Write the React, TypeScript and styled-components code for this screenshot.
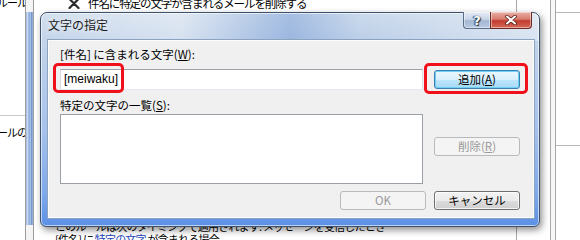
import React from "react";
import styled, { createGlobalStyle } from "styled-components";

const Global = createGlobalStyle`
  html, body { margin: 0; padding: 0; background: #fff; }
  body { font-family: "Noto Sans CJK JP", "Noto Sans", sans-serif; }
`;

const FONT = `"Noto Sans CJK JP", "Noto Sans", sans-serif`;

const Page = styled.div`
  position: relative;
  width: 580px;
  height: 240px;
  overflow: hidden;
  background: #fff;
  display: flex;
  font-family: ${FONT};
  font-size: 11.5px;
  color: #000;
`;

/* ---------- background window ---------- */
const LeftPane = styled.div`
  width: 25px;
  flex: none;
  border-right: 1px solid #9c9c9c;
  display: flex;
  flex-direction: column;
  overflow: hidden;
`;

const ClipText = styled.div<{ $top: number }>`
  display: flex;
  justify-content: flex-end;
  white-space: nowrap;
  height: 13px;
  line-height: 13px;
  margin-top: ${(p) => p.$top}px;
  margin-right: -2px;
  font-size: 11px;
  letter-spacing: -1px;
`;

const LeftRule = styled.div`
  height: 0;
  border-top: 1px solid #c8c8c8;
  margin-top: 106px;
`;

const FrameStrip = styled.div`
  width: 7px;
  flex: none;
  border-right: 1px solid #9c9c9c;
  background: linear-gradient(
      90deg,
      #9fb6dc 0%,
      #d0def2 25%,
      #7d9fd6 45%,
      #b8cdec 60%,
      #6f93cf 80%,
      #a9c0e4 100%
    )
    0 12px / 100% 213px no-repeat,
    #f4f4f4;
`;

const MainPane = styled.div`
  width: 482px;
  flex: none;
  border-right: 1px solid #a8a8a8;
  display: flex;
  flex-direction: column;
`;

const SideCol = styled.div`
  width: 33px;
  flex: none;
  border-right: 1px solid #a8a8a8;
`;

const RightStrip = styled.div`
  width: 4px;
  flex: none;
  border-right: 1px solid #a8a8a8;
  background: #f7f7f7;
`;

const RightPane = styled.div`
  flex: 1;
  display: flex;
  flex-direction: column;
`;

const RightRule = styled.div<{ $top: number }>`
  border-top: 1px solid #b8b8b8;
  margin-top: ${(p) => p.$top}px;
`;

const HeaderRow = styled.div`
  display: flex;
  align-items: center;
  gap: 8px;
  height: 14px;
  margin-top: -4px;
  padding-left: 34px;
  font-size: 11.5px;
  white-space: nowrap;
  letter-spacing: -1.1px;
`;

const Desc = styled.div`
  margin-top: auto;
  margin-bottom: -6px;
  padding-left: 21px;
  font-size: 11px;
  line-height: 13px;
  white-space: nowrap;
  letter-spacing: -0.8px;
`;

const Link = styled.span`
  color: #1c3fb8;
  text-decoration: underline;
`;

/* ---------- dialog ---------- */
const Dialog = styled.div`
  position: absolute;
  left: 40px;
  top: 12px;
  width: 500px;
  height: 215px;
  box-sizing: border-box;
  border: 1px solid #3d526c;
  border-radius: 7px 7px 6px 6px;
  padding: 0 5px 8px 7px;
  display: flex;
  flex-direction: column;
  background: linear-gradient(
        90deg,
        rgba(255, 255, 255, 0) 0%,
        rgba(255, 255, 255, 0.3) 28%,
        rgba(70, 120, 200, 0.32) 50%,
        rgba(120, 160, 215, 0.1) 64%,
        rgba(255, 255, 255, 0.35) 100%
      )
      0 0 / 100% 28px no-repeat,
    linear-gradient(180deg, #d4e0ee 0px, #c3d4ea 28px, #a6c2ec 55%, #7ea9ea 85%, #5b90e6 100%);
  box-shadow: 2px 3px 7px rgba(0, 0, 0, 0.45), inset 0 0 0 1px rgba(255, 255, 255, 0.6);
`;

const TitleBar = styled.div`
  height: 27px;
  flex: none;
  display: flex;
  align-items: flex-start;
`;

const Title = styled.div`
  padding-top: 4px;
  line-height: 16px;
  font-size: 12px;
  color: #1a1a1a;
  text-shadow: 0 0 6px rgba(255, 255, 255, 0.9);
`;

const CaptionButtons = styled.div`
  margin-left: auto;
  margin-right: 2px;
  margin-top: -1px;
  display: flex;
`;

const CapButton = styled.div<{ $kind: "help" | "close" }>`
  height: 17px;
  box-sizing: border-box;
  width: ${(p) => (p.$kind === "help" ? 27 : 42)}px;
  border: 1px solid ${(p) => (p.$kind === "help" ? "#5b6f8a" : "#6b2a22")};
  border-top: none;
  border-radius: ${(p) => (p.$kind === "help" ? "0 0 0 4px" : "0 0 4px 0")};
  ${(p) => (p.$kind === "help" ? "border-right: none;" : "")}
  display: flex;
  align-items: center;
  justify-content: center;
  background: ${(p) =>
    p.$kind === "help"
      ? "linear-gradient(180deg, #e4ecf6 0%, #c9d6e8 45%, #a4b8d4 55%, #b9cbe2 100%)"
      : "linear-gradient(180deg, #eab0a6 0%, #d77b6e 45%, #c23b2e 55%, #d46a5a 100%)"};
  box-shadow: inset 0 0 0 1px rgba(255, 255, 255, 0.45);
  color: #fff;
  font: bold 13px/1 "DejaVu Sans", sans-serif;
  text-shadow: 0 0 1px #203048, 1px 1px 1px #203048, -1px 0 1px #203048;
`;

const Client = styled.div`
  flex: 1;
  box-sizing: border-box;
  border: 1px solid #fbfcfd;
  box-shadow: 0 0 0 1px #8da2bf;
  background: #f0f0f0;
  padding: 6px 13px 0 11px;
  display: flex;
  flex-direction: column;
`;

const Label = styled.div<{ $top?: number }>`
  height: 15px;
  line-height: 15px;
  margin-top: ${(p) => p.$top ?? 0}px;
  font-size: 11.5px;
  color: #000;
  white-space: nowrap;
`;

const Row = styled.div<{ $top: number; $align?: string }>`
  display: flex;
  gap: 11px;
  align-items: ${(p) => p.$align ?? "center"};
  margin-top: ${(p) => p.$top}px;
`;

const Anchor = styled.div`
  position: relative;
  display: flex;
`;

const TextInput = styled.div`
  width: 363px;
  height: 21px;
  box-sizing: border-box;
  border: 1px solid;
  border-color: #9fa3aa #dbdfe6 #e3e9ef #d5d9e0;
  background: #fff;
  padding: 0 3px;
  line-height: 19px;
  font-family: "Liberation Sans", "Noto Sans CJK JP", sans-serif;
  font-size: 12px;
`;

const ListBox = styled.div`
  width: 363px;
  height: 70px;
  box-sizing: border-box;
  border: 1px solid #9a9ea5;
  background: #fff;
`;

const SideButtons = styled.div`
  display: flex;
  flex-direction: column;
  padding-top: 23px;
`;

const Footer = styled.div`
  display: flex;
  justify-content: flex-end;
  gap: 8px;
  margin-top: 7px;
`;

const Button = styled.div<{ $variant?: "default" | "normal" | "disabled" }>`
  width: 86px;
  height: 19px;
  box-sizing: border-box;
  border-radius: 3px;
  display: flex;
  align-items: center;
  justify-content: center;
  font-size: 11.5px;
  line-height: 17px;
  border: 1px solid
    ${(p) => (p.$variant === "default" ? "#3c7fb1" : p.$variant === "disabled" ? "#b7bbbe" : "#707070")};
  color: ${(p) => (p.$variant === "disabled" ? "#9a9a9a" : "#000")};
  background: ${(p) =>
    p.$variant === "default"
      ? "linear-gradient(180deg, #eaf6fd 0%, #d9f0fc 50%, #bee6fd 50%, #a7d9f5 100%)"
      : p.$variant === "disabled"
      ? "#f4f4f4"
      : "linear-gradient(180deg, #f2f2f2 0%, #ebebeb 50%, #dddddd 50%, #cfcfcf 100%)"};
  box-shadow: ${(p) =>
    p.$variant === "default"
      ? "inset 0 0 0 1px #6fd0f5"
      : p.$variant === "disabled"
      ? "none"
      : "inset 0 0 0 1px rgba(255,255,255,0.75)"};
`;

const RedMark = styled.div<{ $l: number; $t: number; $w: number; $h: number }>`
  position: absolute;
  left: ${(p) => p.$l}px;
  top: ${(p) => p.$t}px;
  width: ${(p) => p.$w}px;
  height: ${(p) => p.$h}px;
  box-sizing: border-box;
  border: 3px solid #f0101c;
  border-radius: 5px;
  pointer-events: none;
`;

const DeleteIcon = () => (
  <svg width="12" height="11" viewBox="0 0 12 11">
    <path d="M1.5 1 L10.5 10 M10.5 1 L1.5 10" stroke="#2b2b2b" strokeWidth="2.2" strokeLinecap="round" />
  </svg>
);

const CloseGlyph = () => (
  <svg width="12" height="10" viewBox="0 0 12 10">
    <path d="M2 1.5 L10 8.5 M10 1.5 L2 8.5" stroke="#4a1c16" strokeWidth="3.6" strokeLinecap="round" />
    <path d="M2 1.5 L10 8.5 M10 1.5 L2 8.5" stroke="#ffffff" strokeWidth="2" strokeLinecap="round" />
  </svg>
);

export default function App() {
  return (
    <>
      <Global />
      <Page>
        <LeftPane>
          <ClipText $top={-4}>メールルール</ClipText>
          <LeftRule />
          <ClipText $top={10}>メールの</ClipText>
        </LeftPane>
        <FrameStrip />
        <MainPane>
          <HeaderRow>
            <DeleteIcon />
            <span>件名に特定の文字が含まれるメールを削除する</span>
          </HeaderRow>
          <Desc>
            <div>このルールは次のタイミングで適用されます: メッセージを受信したとき</div>
            <div>
              [件名] に <Link>特定の文字</Link> が含まれる場合
            </div>
          </Desc>
        </MainPane>
        <SideCol />
        <RightStrip />
        <RightPane>
          <RightRule $top={12} />
          <RightRule $top={132} />
        </RightPane>

        <Dialog>
          <TitleBar>
            <Title>文字の指定</Title>
            <CaptionButtons>
              <CapButton $kind="help">?</CapButton>
              <CapButton $kind="close">
                <CloseGlyph />
              </CapButton>
            </CaptionButtons>
          </TitleBar>
          <Client>
            <Label>
              [件名] に含まれる文字(<u>W</u>):
            </Label>
            <Row $top={7}>
              <Anchor>
                <TextInput>[meiwaku]</TextInput>
                <RedMark $l={-7} $t={-6} $w={71} $h={30} />
              </Anchor>
              <Anchor>
                <Button $variant="default">
                  追加(<u>A</u>)
                </Button>
                <RedMark $l={-10} $t={-7} $w={104} $h={31} />
              </Anchor>
            </Row>
            <Label $top={8}>
              特定の文字の一覧(<u>S</u>):
            </Label>
            <Row $top={1} $align="flex-start">
              <ListBox />
              <SideButtons>
                <Button $variant="disabled">
                  削除(<u>R</u>)
                </Button>
              </SideButtons>
            </Row>
            <Footer>
              <Button $variant="disabled">OK</Button>
              <Button $variant="normal">キャンセル</Button>
            </Footer>
          </Client>
        </Dialog>
      </Page>
    </>
  );
}
